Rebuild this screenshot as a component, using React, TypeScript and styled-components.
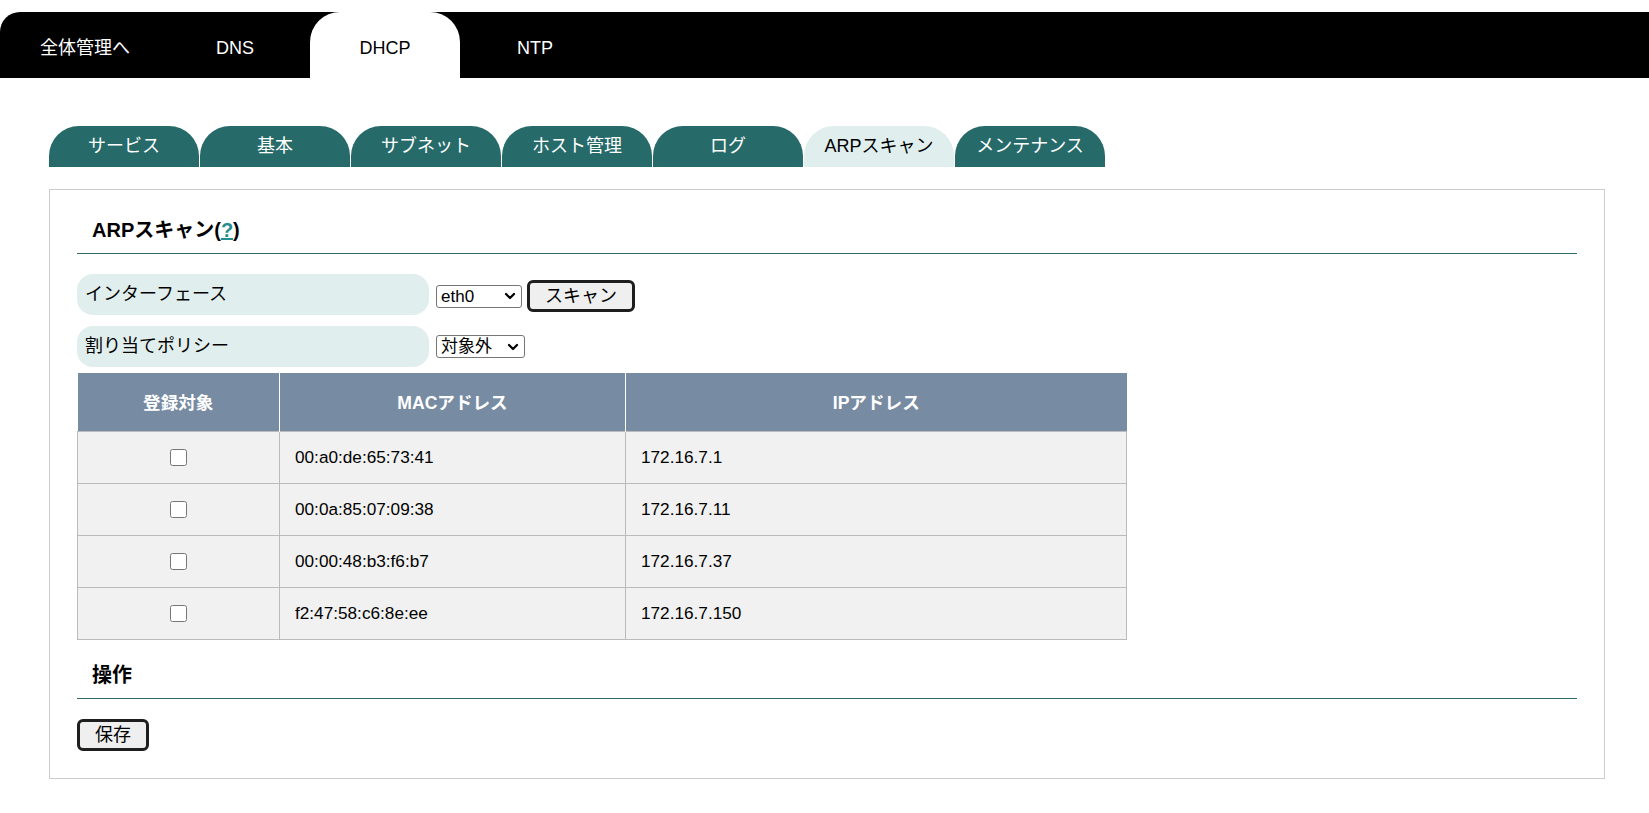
import React from "react";
import styled, { createGlobalStyle } from "styled-components";
import { ChevronDown } from "lucide-react";

const GlobalStyle = createGlobalStyle`
  html, body {
    margin: 0;
    padding: 0;
    background: #ffffff;
  }
  body {
    font-family: "Liberation Sans", "Noto Sans CJK JP", Arial, sans-serif;
    color: #000;
  }
  * { box-sizing: border-box; }
`;

const TopNav = styled.nav`
  margin-top: 12px;
  height: 66px;
  background: #000;
  border-top-left-radius: 20px;
  display: flex;
  padding-left: 10px;
`;

const NavItem = styled.a<{ $active?: boolean }>`
  width: 150px;
  height: 66px;
  padding-top: 24px;
  line-height: 24px;
  font-size: 18px;
  text-align: center;
  text-decoration: none;
  color: ${(p) => (p.$active ? "#000" : "#fff")};
  background: ${(p) => (p.$active ? "#fff" : "transparent")};
  border-radius: ${(p) => (p.$active ? "30px 30px 0 0" : "0")};
  cursor: pointer;
`;

const Main = styled.main`
  padding: 48px 44px 0 49px;
`;

const SubTabs = styled.div`
  display: flex;
  gap: 1px;
`;

const SubTab = styled.a<{ $active?: boolean }>`
  width: 150px;
  height: 41px;
  line-height: 40px;
  font-size: 18px;
  text-align: center;
  text-decoration: none;
  border-radius: 30px 30px 0 0;
  background: ${(p) => (p.$active ? "#e0eeee" : "#266a6a")};
  color: ${(p) => (p.$active ? "#000" : "#fff")};
  cursor: pointer;
`;

const Panel = styled.section`
  margin-top: 22px;
  border: 1px solid #cccccc;
  padding: 28px 27px 27px 27px;
`;

const Heading = styled.h3<{ $gap?: number }>`
  margin: ${(p) => p.$gap ?? 0}px 0 0 0;
  padding: 0 15px 11px 15px;
  font-size: 20px;
  font-weight: bold;
  line-height: 24px;
  border-bottom: 1px solid #2f6b6b;
`;

const HelpLink = styled.a`
  color: #268c8f;
  text-decoration: underline;
`;

const Form = styled.div`
  margin-top: 20px;
  display: flex;
  flex-direction: column;
  gap: 11px;
`;

const FormRow = styled.div`
  display: flex;
  align-items: center;
  gap: 7px;
`;

const FieldLabel = styled.div`
  width: 352px;
  height: 41px;
  background: #e0eeed;
  border-radius: 16px;
  padding-left: 8px;
  display: flex;
  align-items: center;
  font-size: 18px;
  line-height: 24px;
  padding-bottom: 2px;
`;

const Controls = styled.div<{ $shift?: number }>`
  display: flex;
  align-items: center;
  gap: 5px;
  margin-top: ${(p) => p.$shift ?? 0}px;
`;

const SelectWrap = styled.div`
  position: relative;
  display: inline-flex;
`;

const Select = styled.select<{ $w: number }>`
  appearance: none;
  -webkit-appearance: none;
  width: ${(p) => p.$w}px;
  height: 23px;
  font-family: "Liberation Sans", "Noto Sans CJK JP", Arial, sans-serif;
  font-size: 17px;
  line-height: 21px;
  border: 1px solid #767676;
  border-radius: 3px;
  background: #fff;
  color: #000;
  padding: 0 0 0 4px;
`;

const Arrow = styled(ChevronDown)`
  position: absolute;
  right: 4px;
  top: 50%;
  transform: translateY(-50%);
  pointer-events: none;
  color: #000;
`;

const Button = styled.button`
  height: 32px;
  padding: 0 15px;
  font-family: "Liberation Sans", "Noto Sans CJK JP", Arial, sans-serif;
  font-size: 18px;
  line-height: 22px;
  background: #efefef;
  color: #000;
  border: 3px solid #1e1e1e;
  border-radius: 6px;
  cursor: pointer;
`;

const Table = styled.table`
  margin-top: 6px;
  width: 70%;
  border-collapse: collapse;
`;

const Th = styled.th`
  height: 58px;
  background: #778ba2;
  color: #fff;
  font-size: 17.6px;
  font-weight: bold;
  text-align: center;
  border-left: 1px solid #fff;
  border-right: 1px solid #fff;
  &:first-child { border-left: none; }
  &:last-child { border-right: none; }
  padding: 0;
`;

const Td = styled.td<{ $center?: boolean }>`
  height: 52px;
  background: #f1f1f1;
  border: 1px solid #bbbbbb;
  font-size: 17.2px;
  padding: 0 15px;
  text-align: ${(p) => (p.$center ? "center" : "left")};
  vertical-align: middle;
`;

const Check = styled.input`
  width: 17px;
  height: 17px;
  margin: 0;
  vertical-align: middle;
`;

const Actions = styled.div`
  margin-top: 20px;
  display: flex;
`;

const rows = [
  { mac: "00:a0:de:65:73:41", ip: "172.16.7.1" },
  { mac: "00:0a:85:07:09:38", ip: "172.16.7.11" },
  { mac: "00:00:48:b3:f6:b7", ip: "172.16.7.37" },
  { mac: "f2:47:58:c6:8e:ee", ip: "172.16.7.150" },
];

const topItems = ["全体管理へ", "DNS", "DHCP", "NTP"];
const subItems = ["サービス", "基本", "サブネット", "ホスト管理", "ログ", "ARPスキャン", "メンテナンス"];

export default function App() {
  return (
    <>
      <GlobalStyle />
      <TopNav>
        {topItems.map((t) => (
          <NavItem key={t} $active={t === "DHCP"}>
            {t}
          </NavItem>
        ))}
      </TopNav>
      <Main>
        <SubTabs>
          {subItems.map((t) => (
            <SubTab key={t} $active={t === "ARPスキャン"}>
              {t}
            </SubTab>
          ))}
        </SubTabs>
        <Panel>
          <Heading>
            ARPスキャン(<HelpLink href="#">?</HelpLink>)
          </Heading>
          <Form>
            <FormRow>
              <FieldLabel>インターフェース</FieldLabel>
              <Controls $shift={3}>
                <SelectWrap>
                  <Select $w={86} defaultValue="eth0">
                    <option value="eth0">eth0</option>
                  </Select>
                  <Arrow size={16} strokeWidth={3.4} />
                </SelectWrap>
                <Button>スキャン</Button>
              </Controls>
            </FormRow>
            <FormRow>
              <FieldLabel>割り当てポリシー</FieldLabel>
              <Controls>
                <SelectWrap>
                  <Select $w={89} defaultValue="none">
                    <option value="none">対象外</option>
                  </Select>
                  <Arrow size={16} strokeWidth={3.4} />
                </SelectWrap>
              </Controls>
            </FormRow>
          </Form>
          <Table>
            <colgroup>
              <col style={{ width: 202 }} />
              <col style={{ width: 346 }} />
              <col />
            </colgroup>
            <thead>
              <tr>
                <Th>登録対象</Th>
                <Th>MACアドレス</Th>
                <Th>IPアドレス</Th>
              </tr>
            </thead>
            <tbody>
              {rows.map((r) => (
                <tr key={r.mac}>
                  <Td $center>
                    <Check type="checkbox" />
                  </Td>
                  <Td>{r.mac}</Td>
                  <Td>{r.ip}</Td>
                </tr>
              ))}
            </tbody>
          </Table>
          <Heading $gap={23}>操作</Heading>
          <Actions>
            <Button>保存</Button>
          </Actions>
        </Panel>
      </Main>
    </>
  );
}
